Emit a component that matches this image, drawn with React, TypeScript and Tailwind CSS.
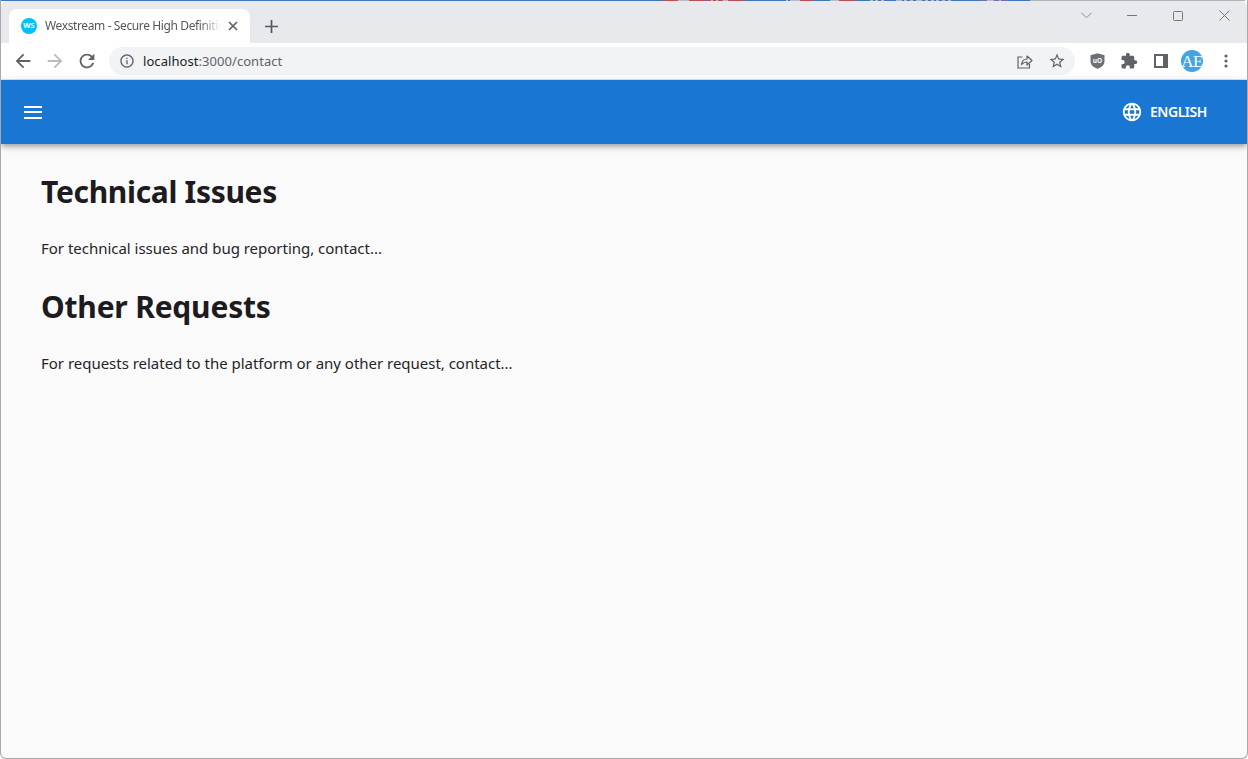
import React from "react";

const B = "#3c78b8", R = "#b84f55", G = "#b7bac0", P = "#6f70b0";
const strip: [string, number][] = [
  [B, 663], [R, 15], [G, 11], [R, 15], [B, 2], [R, 5], [G, 2], [R, 3], [G, 2], [R, 5], [G, 5], [R, 16],
  [B, 42], [G, 2], [B, 2], [G, 10], [R, 13], [B, 17], [G, 9], [R, 16], [B, 15], [G, 3], [B, 2], [G, 3], [B, 3], [G, 3], [B, 12],
  [G, 6], [B, 2], [G, 3], [B, 3], [G, 3], [B, 3], [G, 6], [B, 3], [G, 3], [B, 3], [G, 3], [B, 2], [G, 3], [B, 3], [G, 3], [B, 3], [G, 3], [B, 28],
  [P, 8], [G, 7], [P, 5], [G, 2], [P, 8], [B, 21], ["#b2b3b8", 215],
];

function M({ d, size, color, className }: { d: string; size: number; color: string; className?: string }) {
  return (
    <svg width={size} height={size} viewBox="0 0 24 24" fill={color} className={className}>
      <path d={d} />
    </svg>
  );
}

export default function App() {
  return (
    <div className="w-[1248px] h-[759px] overflow-hidden flex flex-col bg-[#fafafa] border-l border-r border-b border-[#a9a9a9] rounded-br-[6px] rounded-bl-[6px] font-['Noto_Sans',sans-serif]">
      <div className="h-px shrink-0 -mx-px flex">
        {strip.map(([c, w], i) => (
          <div key={i} className="h-px shrink-0" style={{ background: c, width: w }} />
        ))}
      </div>
      {/* tab strip */}
      <div className="h-[42px] shrink-0 bg-[#e7e9ed] flex items-end pl-[8px] relative rounded-tl-[6px] rounded-tr-[6px]">
        <div className="w-[241px] h-[34px] bg-white rounded-t-[8px] flex items-center pl-[12px] pr-[10px] relative">
          <div className="w-[16px] h-[16px] rounded-full bg-[#00bfff] flex items-center justify-center text-white text-[7.5px] font-bold leading-none shrink-0">WS</div>
          <span className="ml-[8px] text-[12px] tracking-[-0.38px] text-[#55575a] whitespace-nowrap overflow-hidden w-[176px] leading-[16px] [mask-image:linear-gradient(to_right,black_88%,transparent)]">Wexstream - Secure High Definition</span>
          <svg width="10" height="10" viewBox="0 0 10 10" className="ml-auto mr-[2px]"><path d="M1 1 L9 9 M9 1 L1 9" stroke="#5f6368" strokeWidth="1.7" /></svg>
        </div>
        <div className="ml-[15px] mb-[10px]">
          <svg width="13" height="13" viewBox="0 0 13 13"><path d="M6.5 0 V13 M0 6.5 H13" stroke="#55585c" strokeWidth="1.7" /></svg>
        </div>
        <div className="absolute right-0 top-0 flex items-center">
          <div className="w-[46px] h-[29px] flex items-center justify-center">
            <svg width="11" height="7" viewBox="0 0 11 7"><path d="M0.5 0.8 L5.5 5.8 L10.5 0.8" fill="none" stroke="#8a8c90" strokeWidth="1" /></svg>
          </div>
          <div className="w-[46px] h-[29px] flex items-center justify-center">
            <div className="w-[10px] h-px bg-[#74767a]" />
          </div>
          <div className="w-[46px] h-[29px] flex items-center justify-center">
            <div className="w-[10px] h-[10px] rounded-[1.5px] border border-[#74767a]" />
          </div>
          <div className="w-[46px] h-[29px] flex items-center justify-center">
            <svg width="11" height="11" viewBox="0 0 11 11"><path d="M0.5 0.5 L10.5 10.5 M10.5 0.5 L0.5 10.5" stroke="#74767a" strokeWidth="1" /></svg>
          </div>
        </div>
      </div>
      {/* toolbar */}
      <div className="h-[36px] shrink-0 bg-white flex items-center pl-[11px] border-b border-[#e3e5e8] box-content">
        <M size={22} color="#5f6368" d="M20 11H7.83l5.59-5.59L12 4l-8 8 8 8 1.41-1.41L7.83 13H20v-2z" />
        <M size={22} color="#b9bbbe" className="ml-[10px] rotate-180" d="M20 11H7.83l5.59-5.59L12 4l-8 8 8 8 1.41-1.41L7.83 13H20v-2z" />
        <M size={22} color="#5f6368" className="ml-[10px]" d="M17.65 6.35C16.2 4.9 14.21 4 12 4c-4.42 0-7.99 3.58-7.99 8s3.57 8 7.99 8c3.73 0 6.84-2.55 7.73-6h-2.08c-.82 2.33-3.04 4-5.65 4-3.31 0-6-2.69-6-6s2.69-6 6-6c1.66 0 3.14.69 4.22 1.78L13 11h7V4l-2.35 2.35z" />
        <div className="ml-[11px] w-[966px] h-[28px] rounded-full bg-[#f1f3f4] flex items-center pl-[10px] pr-[10px]">
          <M size={16} color="#5f6368" d="M11 7h2v2h-2zm0 4h2v6h-2zm1-9C6.48 2 2 6.48 2 12s4.48 10 10 10 10-4.48 10-10S17.52 2 12 2zm0 18c-4.41 0-8-3.59-8-8s3.57-8 8-8 8 3.59 8 8-3.59 8-8 8z" />
          <span className="ml-[8px] text-[13px] tracking-[0.06px] leading-none text-[#202124]">localhost<span className="text-[#5f6368]">:3000/contact</span></span>
          <svg width="16" height="15" viewBox="0 0 16 15" className="ml-auto" fill="none" stroke="#5f6368" strokeWidth="1.2">
            <path d="M5.5 3 H1 V14 H12.5 V10" />
            <path d="M4.5 10.5 C5 7 7.5 5 10 5 V2 L15 6.5 L10 11 V8 C8 8 6 8.7 4.5 10.5 Z" strokeLinejoin="round" />
          </svg>
          <M size={18} color="#5f6368" className="ml-[15px] mr-[-1px]" d="M22 9.24l-7.19-.62L12 2 9.19 8.63 2 9.24l5.46 4.73L5.82 21 12 17.27 18.18 21l-1.63-7.03L22 9.24zM12 15.4l-3.76 2.27 1-4.28-3.32-2.88 4.38-.38L12 6.1l1.71 4.04 4.38.38-3.32 2.88 1 4.28L12 15.4z" />
        </div>
        <svg width="15" height="16" viewBox="0 0 15 16" className="ml-[15px]">
          <path d="M7.5 0.3 L14.5 2.3 V8 C14.5 12 11.5 14.5 7.5 15.8 C3.5 14.5 0.5 12 0.5 8 V2.3 Z" fill="#6d7074" />
          <text x="7.5" y="10" fontSize="6.5" fontWeight="700" fill="#fff" textAnchor="middle" fontFamily="Noto Sans">uO</text>
        </svg>
        <M size={18} color="#5f6368" className="ml-[15px]" d="M20.5 11H19V7c0-1.1-.9-2-2-2h-4V3.5C13 2.12 11.88 1 10.5 1S8 2.12 8 3.5V5H4c-1.1 0-1.99.9-1.99 2v3.8H3.5c1.49 0 2.7 1.21 2.7 2.7s-1.21 2.7-2.7 2.7H2V20c0 1.1.9 2 2 2h3.8v-1.5c0-1.49 1.21-2.7 2.7-2.7 1.49 0 2.7 1.21 2.7 2.7V22H17c1.1 0 2-.9 2-2v-4h1.5c1.38 0 2.5-1.12 2.5-2.5S21.88 11 20.5 11z" />
        <svg width="14" height="14" viewBox="0 0 14 14" className="ml-[16px]">
          <rect x="1" y="1" width="12" height="12" fill="none" stroke="#5f6368" strokeWidth="2" />
          <rect x="9" y="1" width="4" height="12" fill="#5f6368" />
        </svg>
        <div className="ml-[13px] w-[22px] h-[22px] rounded-full bg-[#42a5e2] text-white flex items-center justify-center text-[17px] tracking-[-0.5px] leading-none font-['Liberation_Serif',serif]">AE</div>
        <svg width="4" height="14" viewBox="0 0 4 14" className="ml-[21px]" fill="#5f6368">
          <circle cx="2" cy="2" r="1.6" /><circle cx="2" cy="7" r="1.6" /><circle cx="2" cy="12" r="1.6" />
        </svg>
      </div>
      {/* app bar */}
      <header className="h-[64px] shrink-0 bg-[#1976d2] flex items-center justify-between pl-[23px] pr-[40px] shadow-[0_2px_4px_-1px_rgba(0,0,0,0.2),0_4px_5px_0_rgba(0,0,0,0.14),0_1px_10px_0_rgba(0,0,0,0.12)] relative">
        <div className="flex flex-col gap-[3.5px] w-[18px]">
          <div className="h-[2px] bg-white" />
          <div className="h-[2px] bg-white" />
          <div className="h-[2px] bg-white" />
        </div>
        <div className="flex items-center text-white">
          <M size={22} color="#fff" d="M11.99 2C6.47 2 2 6.48 2 12s4.47 10 9.99 10C17.52 22 22 17.52 22 12S17.52 2 11.99 2zm6.93 6h-2.95c-.32-1.25-.78-2.45-1.38-3.56 1.84.63 3.37 1.91 4.33 3.56zM12 4.04c.83 1.2 1.48 2.53 1.91 3.96h-3.82c.43-1.43 1.08-2.76 1.91-3.96zM4.26 14C4.1 13.36 4 12.69 4 12s.1-1.36.26-2h3.38c-.08.66-.14 1.32-.14 2 0 .68.06 1.34.14 2H4.26zm.82 2h2.95c.32 1.25.78 2.45 1.38 3.56-1.84-.63-3.37-1.9-4.33-3.56zm2.95-8H5.08c.96-1.66 2.49-2.93 4.33-3.56C8.81 5.55 8.35 6.75 8.03 8zM12 19.96c-.83-1.2-1.48-2.53-1.91-3.96h3.82c-.43 1.43-1.08 2.76-1.91 3.96zM14.34 14H9.66c-.09-.66-.16-1.32-.16-2 0-.68.07-1.35.16-2h4.68c.09.65.16 1.32.16 2 0 .68-.07 1.34-.16 2zm.25 5.56c.6-1.11 1.06-2.31 1.38-3.56h2.95c-.96 1.65-2.49 2.93-4.33 3.56zM16.36 14c.08-.66.14-1.32.14-2 0-.68-.06-1.34-.14-2h3.38c.16.64.26 1.31.26 2s-.1 1.36-.26 2h-3.38z" />
          <span className="ml-[7px] text-[14px] tracking-[-0.45px] font-semibold leading-none">ENGLISH</span>
        </div>
      </header>
      {/* content */}
      <main className="pl-[40px] pt-[30px] text-[#1d1b20]">
        <h1 className="text-[30px] tracking-[-0.32px] font-bold leading-[36px]">Technical Issues</h1>
        <p className="mt-[28px] text-[15px] tracking-[-0.02px] leading-[20px] text-[#26242a]">For technical issues and bug reporting, contact...</p>
        <h1 className="mt-[31px] text-[30px] tracking-[-0.2px] font-bold leading-[36px]">Other Requests</h1>
        <p className="mt-[28px] text-[15px] tracking-[-0.02px] leading-[20px] text-[#26242a]">For requests related to the platform or any other request, contact...</p>
      </main>
    </div>
  );
}
